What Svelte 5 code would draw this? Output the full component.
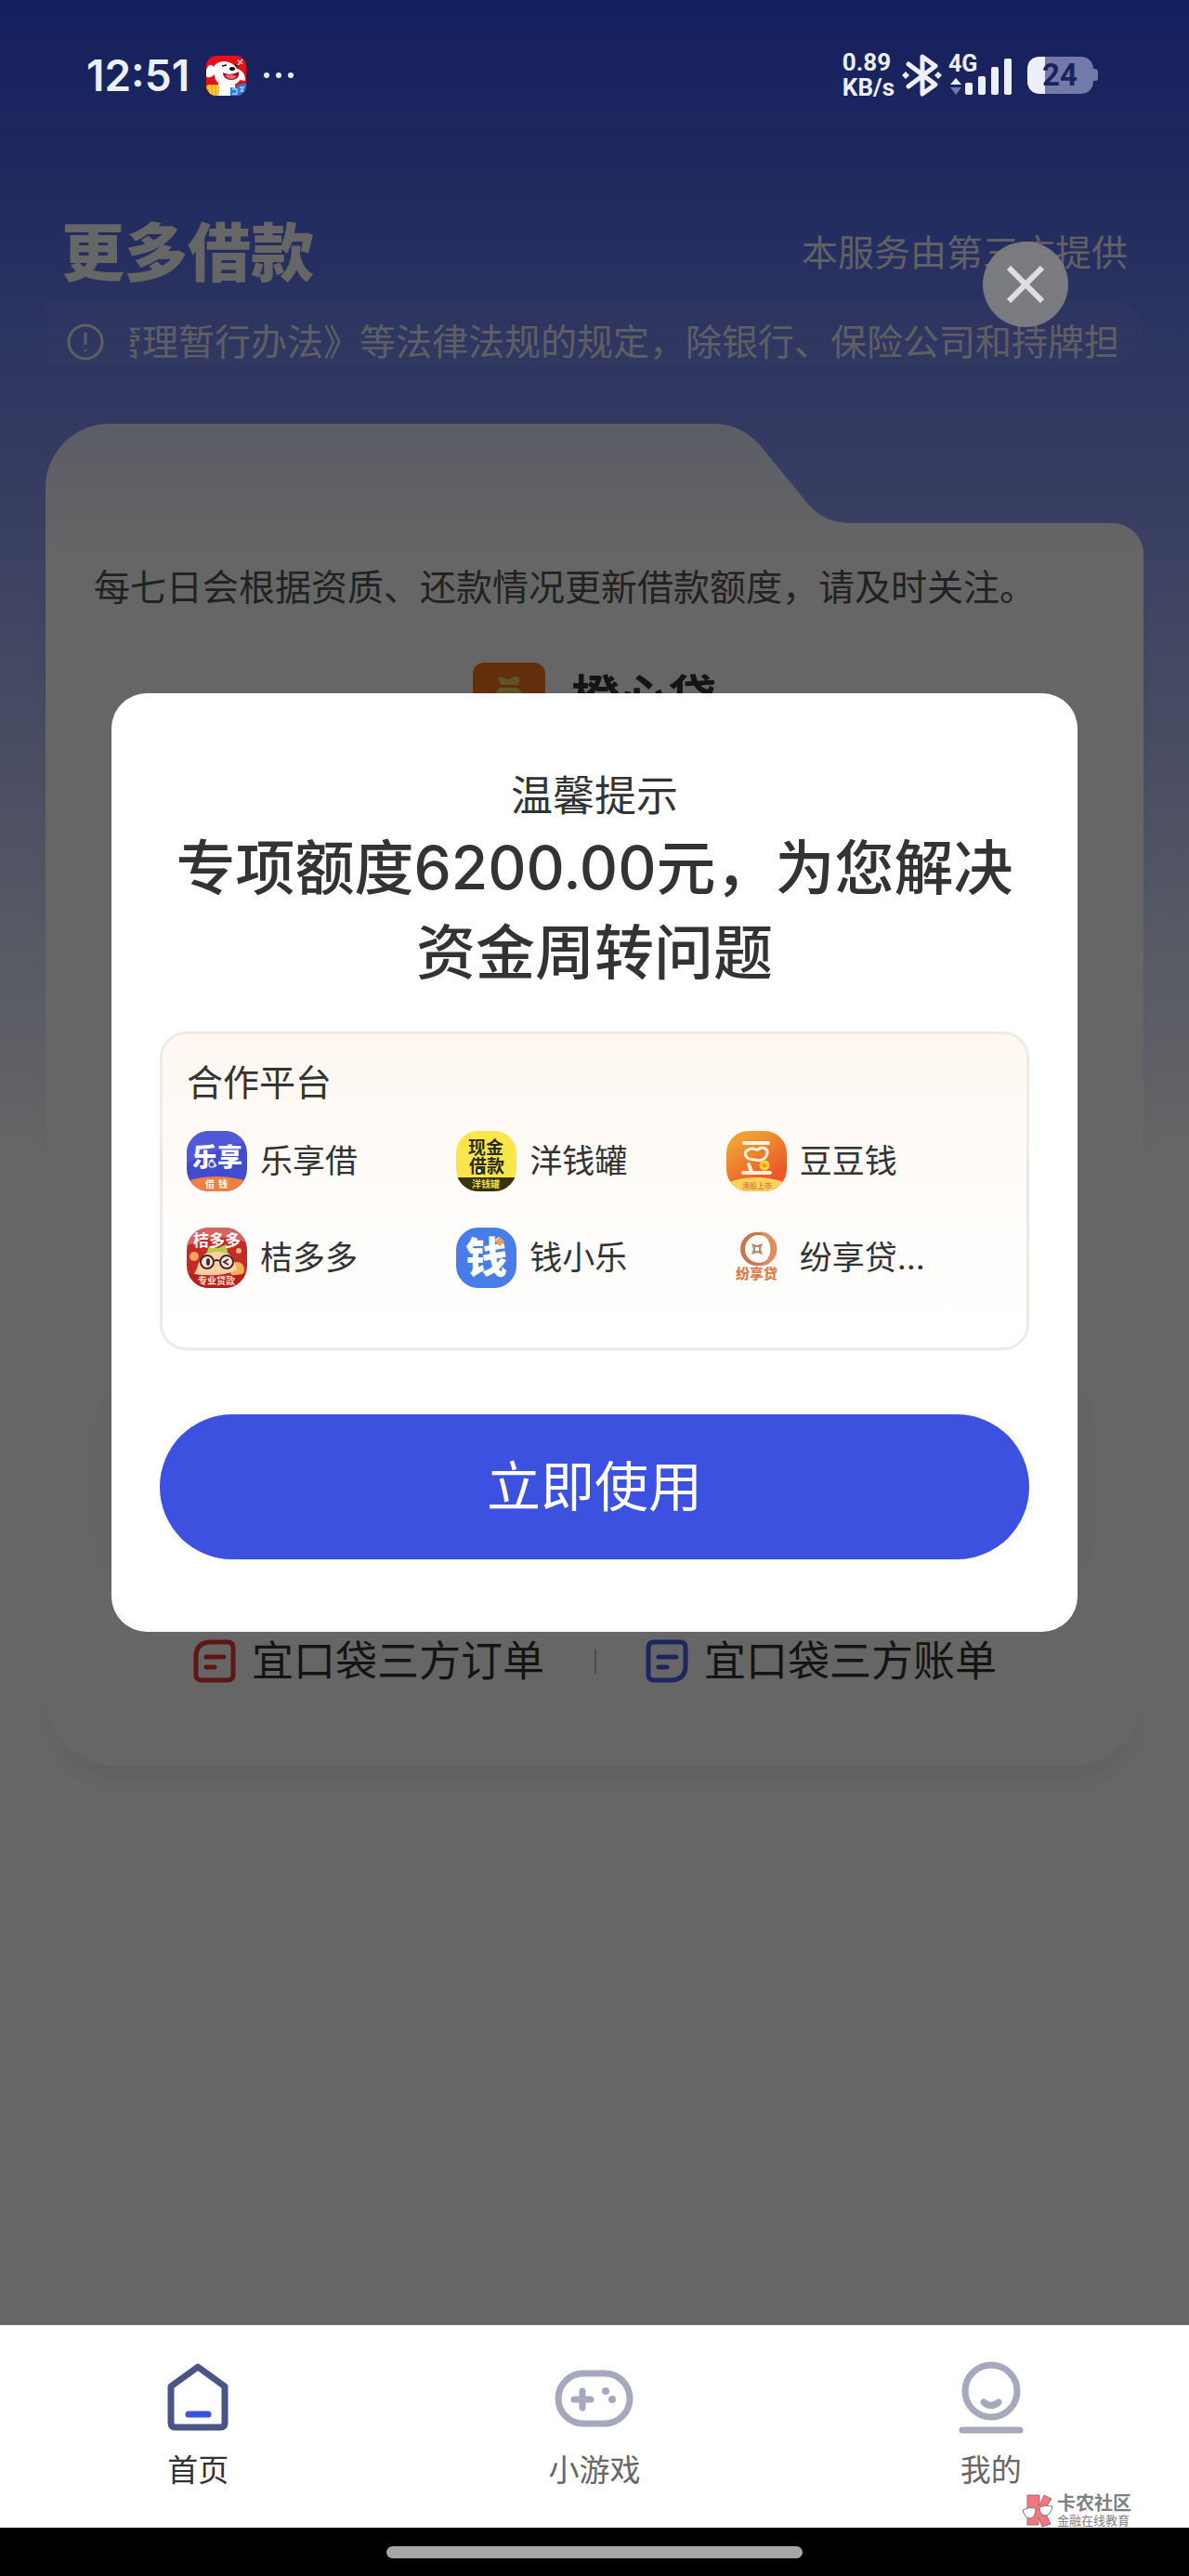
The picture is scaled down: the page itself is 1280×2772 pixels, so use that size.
<script>
  let dialogOpen = $state(true);
  let activeTab = $state('home');

  const notice = '管理暂行办法》等法律法规的规定，除银行、保险公司和持牌担';

  const partners = [
    { id: 'lexiang', name: '乐享借' },
    { id: 'yangqian', name: '洋钱罐' },
    { id: 'doudou', name: '豆豆钱' },
    { id: 'juduo', name: '桔多多' },
    { id: 'xiaole', name: '钱小乐' },
    { id: 'fenxiang', name: '纷享贷...' },
  ];

  const orders = [
    { label: '宜口袋三方订单', color: '#e83a32', flip: false },
    { label: '宜口袋三方账单', color: '#4a62ec', flip: true },
  ];

  const tabs = [
    { id: 'home', label: '首页' },
    { id: 'game', label: '小游戏' },
    { id: 'mine', label: '我的' },
  ];
</script>

<div class="screen" lang="zh-CN">
  <div class="page">
    <div class="status">
      <div class="status-side">
        <span class="time">12:51</span>
        <svg class="mascot" viewBox="0 0 43 43" aria-hidden="true">
          <rect width="43" height="43" fill="#e80f16" />
          <path d="M8 12C12 4 28 4 33 14C37 14 43 20 42 27L36 26C34 32 20 35 13 29C10 27 9 23 9 20C6 24 1 24 0 22V15C2 10 5 8 8 12Z" fill="#fff" />
          <path d="M13 29Q22 35 31 30L32 43H12Z" fill="#fff" />
          <path d="M18 18C23 21 30 20 35 17C36 24 32 26 27 26C22 26 18 23 18 18Z" fill="#9c1420" />
          <path d="M20 21C25 19 31 21 33 22C30 26 24 26 20 21Z" fill="#f2686c" />
          <ellipse cx="28" cy="14" rx="3" ry="2" fill="#111" />
          <path d="M17 11l5-1M31 10l4 1" stroke="#111" stroke-width="1.4" />
          <path d="M34 5l5 4M39 4l-5 6" stroke="#ffd0d0" stroke-width="1.6" />
          <rect y="31" width="14" height="12" rx="3" fill="#f9b120" />
          <path d="M4 32v11M8 32v11M12 32v11" stroke="#fcd44c" stroke-width="1.6" />
          <path d="M26 34l6 1 2-4 9-1v13H26Z" fill="#2b78e4" />
          <path d="M28 36h5v5h-5M36 34h4l-3 4h4" stroke="#9ed0ff" stroke-width="1.4" fill="none" />
        </svg>
        <svg class="dots" viewBox="0 0 34 8" aria-hidden="true">
          <circle cx="4" cy="4" r="3" />
          <circle cx="17" cy="4" r="3" />
          <circle cx="30" cy="4" r="3" />
        </svg>
      </div>
      <div class="status-side">
        <span class="speed">0.89<br />KB/s</span>
        <svg class="bluetooth" viewBox="0 0 44 48" aria-hidden="true">
          <path d="M7 12L36 34L22 44V4L36 14L7 36" fill="none" stroke="#eceefa" stroke-width="5" stroke-linejoin="round" stroke-linecap="round" />
          <path d="M4 20l4 4-4 4-4-4ZM39 20l4 4-4 4-4-4Z" fill="#eceefa" />
        </svg>
        <svg class="signal" viewBox="0 0 70 48" aria-hidden="true">
          <text x="1" y="20" class="net">4G</text>
          <path d="M3 34L9 27L15 34Z" fill="#eceefa" />
          <path d="M3 37L9 45L15 37Z" fill="#7078a8" />
          <g fill="#eceefa">
            <rect x="19" y="32" width="8" height="13" rx="2" />
            <rect x="33" y="25" width="8" height="20" rx="2" />
            <rect x="47" y="15" width="8" height="30" rx="2" />
            <rect x="61" y="6" width="8" height="39" rx="2" />
          </g>
        </svg>
        <svg class="battery" viewBox="0 0 76 40" aria-label="24%">
          <path d="M14 0H57C66 0 71 6 71 13C77 13 76 17 76 20C76 24 77 26 71 26C71 34 66 40 57 40H14C5 40 0 34 0 26V14C0 5 5 0 14 0Z" fill="#737aa8" />
          <path d="M19 0V40H14C5 40 0 34 0 26V14C0 5 5 0 14 0Z" fill="#eceefa" />
          <text x="16" y="31" class="level">24</text>
        </svg>
      </div>
    </div>

    <header class="head">
      <h1>更多借款</h1>
      <span class="provider">本服务由第三方提供</span>
    </header>

    <div class="notice">
      <svg viewBox="0 0 40 40" aria-hidden="true">
        <circle cx="20" cy="20" r="18" />
        <path d="M20 10v13M20 28v2" />
      </svg>
      <div class="notice-view"><span>{notice}</span></div>
    </div>

    <section class="card">
      <svg class="card-top" viewBox="0 0 1182 145" preserveAspectRatio="none" aria-hidden="true">
        <defs>
          <linearGradient id="cardFill" x1="0" y1="0" x2="0" y2="1">
            <stop offset="0" stop-color="#fff" stop-opacity="0.78" />
            <stop offset="1" stop-color="#fff" />
          </linearGradient>
        </defs>
        <path
          d="M0 145V70C0 31 31 0 70 0H718C741 0 759 10 773 28L817 82C832 101 846 107 872 107H1148C1167 107 1182 122 1182 141V145Z"
          fill="url(#cardFill)"
        />
        <path
          d="M1 110V70C1 31 31 1 70 1H718C741 1 759 11 773 29L817 83C832 102 846 108 872 108H1148C1167 108 1181 122 1181 141"
          fill="none"
          stroke="#fff"
          stroke-opacity="0.2"
          stroke-width="3"
        />
      </svg>
      <div class="card-body">
        <p class="tip">每七日会根据资质、还款情况更新借款额度，请及时关注。</p>
        <div class="product">
          <svg viewBox="0 0 78 78" aria-hidden="true">
            <rect width="78" height="78" rx="12" fill="#f57420" />
            <path d="M27 17Q30 14 33 16Q38 20 43 16Q49 13 50 17Q51 20 49 24H30Q29 20 27 17Z" fill="#e8d468" />
            <path d="M29 27H48C60 38 62 62 39 62C16 62 18 38 29 27Z" fill="#e8d468" />
          </svg>
          <strong>橙心贷</strong>
        </div>
        <div class="quota"></div>
        <nav class="orders">
          {#each orders as order}
            <a href="#orders">
              <svg viewBox="0 0 48 48" aria-hidden="true" fill="none" stroke={order.color} stroke-width="5">
                {#if order.flip}
                  <path d="M10 3H38Q44 3 44 9V28Q44 44 28 44H10Q4 44 4 38V9Q4 3 10 3Z" />
                {:else}
                  <path d="M20 3H38Q44 3 44 9V38Q44 44 38 44H10Q4 44 4 38V19Q4 3 20 3Z" />
                {/if}
                <path d="M15 19H34M15 30H24" stroke-linecap="round" />
              </svg>
              {order.label}
            </a>
          {/each}
        </nav>
      </div>
    </section>

    {#if dialogOpen}
      <div class="mask">
        <button class="close" aria-label="关闭" onclick={() => (dialogOpen = false)}>
          <svg viewBox="0 0 40 40" aria-hidden="true"><path d="M2 2L38 38M38 2L2 38" /></svg>
        </button>
        <div class="dialog" role="dialog" aria-labelledby="dialog-title">
          <p class="dialog-tag">温馨提示</p>
          <h2 id="dialog-title">专项额度6200.00元，为您解决资金周转问题</h2>
          <div class="panel">
            <h3>合作平台</h3>
            <ul>
              {#each partners as partner}
                <li>
                  <svg class="logo" viewBox="0 0 65 65" aria-hidden="true">
                    {#if partner.id === 'lexiang'}
                      <rect width="65" height="65" fill="#414bd0" />
                      <path d="M0 0H65V12Q30 20 0 34Z" fill="#5159d6" />
                      <text x="6" y="38" font-size="27" font-weight="900" fill="#fff">乐享</text>
                      <circle cx="27" cy="36" r="3" fill="#414bd0" stroke="#d9c8d8" stroke-width="1.5" />
                      <path d="M0 54Q32 44 65 54V65H0Z" fill="#ef8040" />
                      <text x="20" y="61" font-size="10" font-weight="700" fill="#fff">借</text>
                      <text x="34" y="61" font-size="10" font-weight="700" fill="#fff">钱</text>
                    {:else if partner.id === 'yangqian'}
                      <rect width="65" height="65" fill="#fae54b" />
                      <text x="13" y="25" font-size="19" font-weight="700" fill="#2b2913">现金</text>
                      <text x="14" y="45" font-size="19" font-weight="700" fill="#2b2913">借款</text>
                      <circle cx="25" cy="43" r="3" fill="#fff" stroke="#2b2913" stroke-width="2" />
                      <rect y="50" width="65" height="15" fill="#37330d" />
                      <text x="17" y="61" font-size="10" font-weight="700" fill="#f1dd48">洋钱罐</text>
                    {:else if partner.id === 'doudou'}
                      <defs>
                        <linearGradient id="bean" x1="0.2" y1="0" x2="0.8" y2="1">
                          <stop offset="0.1" stop-color="#efa034" />
                          <stop offset="0.8" stop-color="#ee5728" />
                        </linearGradient>
                      </defs>
                      <rect width="65" height="65" fill="url(#bean)" />
                      <g fill="none" stroke="#fff1dc" stroke-width="4" stroke-linecap="round">
                        <path d="M19 13H45" />
                        <path d="M24 20C29 17 31 21 34 20C39 16 45 19 44 24C43 30 37 33 31 31C20 31 17 23 24 20Z" stroke-width="3" />
                        <path d="M24 36L27 44M18 45H47" />
                      </g>
                      <circle cx="41" cy="37" r="4" fill="#f0a030" stroke="#ffd632" stroke-width="3" />
                      <path d="M0 56Q32 44 65 56V65H0Z" fill="#fbd25c" />
                      <text x="17" y="62" font-size="8" font-weight="700" fill="#d98a3a">港股上市</text>
                    {:else if partner.id === 'juduo'}
                      <rect width="65" height="65" fill="#c42a28" />
                      <path d="M0 0H65V16Q30 4 0 20Z" fill="#d76360" />
                      <circle cx="8" cy="31" r="5" fill="#f5a45c" />
                      <circle cx="56" cy="25" r="3" fill="#f8b878" />
                      <circle cx="54" cy="45" r="8" fill="#f3b04e" />
                      <path d="M11 44Q16 24 33 24Q50 24 54 46Q34 54 8 50Z" fill="#fbd0a4" />
                      <path d="M22 26L24 20L34 22L43 18L44 28Q33 24 22 28Z" fill="#b8cf45" />
                      <text x="7" y="20" font-size="17" font-weight="700" fill="#fff">桔多多</text>
                      <g fill="#fbe4d4" stroke="#3f2a2c" stroke-width="2">
                        <circle cx="22" cy="37" r="7" />
                        <circle cx="43" cy="37" r="7" />
                        <path d="M30 36Q32 34 35 36" fill="none" />
                      </g>
                      <ellipse cx="23" cy="37" rx="2" ry="4" fill="#4a2c2e" />
                      <path d="M45 34L40 37L45 40" fill="none" stroke="#4a2c2e" stroke-width="2" />
                      <path d="M0 49Q32 56 65 49V65H0Z" fill="#b8201f" />
                      <text x="12" y="61" font-size="10" font-weight="700" fill="#ffe0c0">专业贷款</text>
                    {:else if partner.id === 'xiaole'}
                      <rect width="65" height="65" fill="#477de6" />
                      <text x="10" y="49" font-size="45" font-weight="900" fill="#fff">钱</text>
                      <path d="M47 10L52 15L47 20L42 15Z" fill="#f09a52" />
                    {:else}
                      <rect width="65" height="65" fill="#fffefd" />
                      <path fill-rule="evenodd" d="M33 5A18 18 0 1 0 33 41A18 18 0 1 0 33 5ZM35 8A15 15 0 1 1 35 38A15 15 0 1 1 35 8Z" fill="#c9764c" />
                      <path d="M36 5A18 18 0 0 1 36 41A20 20 0 0 0 48 23A20 20 0 0 0 36 5Z" fill="#dd8d62" stroke="#dd8d62" />
                      <path d="M27 17L33 19L39 17L37 23L39 29L33 27L27 29L29 23Z" fill="#b98a70" />
                      <rect x="31" y="21" width="4" height="4" fill="#fff" />
                      <text x="10" y="55" font-size="15" font-weight="900" fill="#d8814f">纷享贷</text>
                    {/if}
                  </svg>
                  {partner.name}
                </li>
              {/each}
            </ul>
          </div>
          <button class="submit">立即使用</button>
        </div>
      </div>
    {/if}
  </div>

  <nav class="tabbar">
    {#each tabs as tab}
      <button class:active={activeTab === tab.id} onclick={() => (activeTab = tab.id)}>
        <svg viewBox="0 0 86 86" aria-hidden="true" fill="none" stroke-width="7">
          {#if tab.id === 'home'}
            <path d="M43 9L14 30V69Q14 74 19 74H67Q72 74 72 69V30Z" stroke="#4b5585" stroke-linejoin="round" />
            <path d="M33 60H54" stroke="#3a52e2" stroke-linecap="round" />
          {:else if tab.id === 'game'}
            <rect x="4" y="16" width="77" height="54" rx="27" stroke="#a6a9bd" />
            <path d="M30 35V53M21 44H39" stroke="#a6a9bd" stroke-linecap="round" />
            <circle cx="55" cy="35" r="4" fill="#a6a9bd" stroke="none" />
            <circle cx="62" cy="44" r="4" fill="#a6a9bd" stroke="none" />
          {:else}
            <circle cx="43" cy="35" r="28" stroke="#a6a9bd" />
            <path d="M35 47Q43 54 51 47" stroke="#a6a9bd" stroke-linecap="round" />
            <path d="M12 77H74" stroke="#a6a9bd" stroke-linecap="round" />
          {/if}
        </svg>
        {tab.label}
      </button>
    {/each}
    <div class="mark">
      <svg viewBox="0 0 34 36" aria-hidden="true">
        <path d="M6 1H19V12L24 1L32 5L24 17L31 32L22 35L18 25V33H6Z" fill="#f4777f" stroke="#8a7376" />
        <path d="M1 17Q8 13 15 15Q15 25 9 26Q3 26 1 17ZM19 14Q25 11 33 13Q31 23 25 23Q19 22 19 14Z" fill="#fff" stroke="#777" />
      </svg>
      <div>
        <b>卡农社区</b>
        <small>金融在线教育</small>
      </div>
    </div>
  </nav>
  <div class="gesture"><span></span></div>
</div>

<style>
  :global(body) {
    background: #000;
  }

  .screen {
    min-height: 100vh;
    display: flex;
    flex-direction: column;
    font-family: Inter, 'Noto Sans CJK SC', sans-serif;
    color: #333;
  }

  .screen h1,
  .screen h2,
  .screen h3,
  .screen p,
  .screen ul {
    margin: 0;
    padding: 0;
    font-weight: 400;
  }

  .screen svg {
    display: block;
    flex-shrink: 0;
  }

  button {
    border: none;
    padding: 0;
    font-family: inherit;
    cursor: pointer;
  }

  .page {
    position: relative;
    flex: 1;
    background: #fff linear-gradient(#324eeb, #fff) top / 100% 1240px no-repeat;
  }

  .status {
    position: relative;
    z-index: 2;
    height: 162px;
    padding: 0 98px 0 93px;
    display: flex;
    align-items: center;
    justify-content: space-between;
    color: #eceefa;
  }

  .status-side {
    display: flex;
    align-items: center;
  }

  .time {
    font-size: 46px;
    font-weight: 600;
  }

  .mascot {
    width: 43px;
    height: 43px;
    margin: 0 18px;
    border-radius: 11px;
  }

  .dots {
    width: 34px;
    height: 8px;
    fill: #eceefa;
  }

  .speed {
    font: 700 26px/27px Roboto, sans-serif;
  }

  .bluetooth {
    width: 44px;
    height: 48px;
    margin: 0 5px 0 8px;
  }

  .screen .signal {
    width: 70px;
    height: 48px;
    margin-right: 16px;
    overflow: visible;
  }

  .net {
    font: 700 25px Roboto, sans-serif;
    fill: #eceefa;
  }

  .battery {
    width: 76px;
    height: 40px;
  }

  .level {
    font: 700 33px Roboto, sans-serif;
    fill: #19235e;
  }

  .head {
    padding: 62px 66px 0;
    display: flex;
    align-items: center;
    justify-content: space-between;
    color: #fff;
  }

  .screen .head h1 {
    font-size: 68px;
    line-height: 96px;
    font-weight: 900;
  }

  .provider {
    font-size: 39px;
    line-height: 96px;
    opacity: 0.9;
  }

  .notice {
    height: 68px;
    margin: 4px 50px 0;
    padding: 20px 28px 0 22px;
    box-sizing: border-box;
    display: flex;
    align-items: center;
    gap: 28px;
    border-radius: 0 34px 34px 0;
    background: rgba(255, 255, 255, 0.06);
    color: #fff;
  }

  .notice svg {
    width: 40px;
    height: 40px;
    fill: none;
    stroke: rgba(255, 255, 255, 0.85);
    stroke-width: 3;
  }

  .notice-view {
    flex: 1;
    display: flex;
    overflow: hidden;
    font-size: 39px;
    line-height: 52px;
    white-space: nowrap;
    opacity: 0.85;
  }

  .notice-view span {
    margin-left: -26px;
  }

  .card {
    margin: 64px 49px 0;
  }

  .card-top {
    width: 100%;
    height: 145px;
  }

  .card-body {
    padding: 0 52px 81px;
    border-radius: 0 0 76px 76px;
    background: #fff;
    box-shadow: 0 24px 24px -8px rgba(0, 0, 0, 0.06);
  }

  .card .tip {
    font-size: 39px;
    line-height: 62px;
    color: #555;
  }

  .product {
    margin-top: 50px;
    display: flex;
    align-items: center;
    justify-content: center;
    gap: 28px;
  }

  .product svg {
    width: 78px;
    height: 78px;
  }

  .product strong {
    font-size: 52px;
    line-height: 78px;
    color: #333;
  }

  .quota {
    height: 236px;
    margin-top: 686px;
    border-radius: 60px;
    background: #fafafa;
  }

  .orders {
    margin-top: 44px;
    display: flex;
    justify-content: center;
  }

  .orders a {
    display: flex;
    align-items: center;
    gap: 16px;
    padding: 0 54px;
    font-size: 45px;
    line-height: 62px;
    color: #333;
    text-decoration: none;
  }

  .orders a + a {
    background: linear-gradient(#bbb, #bbb) left center / 2px 26px no-repeat;
  }

  .orders svg {
    width: 48px;
    height: 48px;
  }

  .mask {
    position: absolute;
    inset: 0;
    z-index: 1;
    display: flex;
    align-items: center;
    justify-content: center;
    background: rgba(0, 0, 0, 0.6);
  }

  .close {
    position: absolute;
    top: 260px;
    right: 130px;
    width: 92px;
    height: 92px;
    display: flex;
    align-items: center;
    justify-content: center;
    border-radius: 50%;
    background: rgba(126, 126, 127, 0.96);
  }

  .close svg {
    width: 40px;
    height: 40px;
    fill: none;
    stroke: #dedede;
    stroke-width: 6;
  }

  .dialog {
    flex: 1;
    margin: 0 120px;
    padding: 80px 52px 78px;
    border-radius: 38px;
    background: #fff;
    text-align: center;
  }

  .dialog .dialog-tag {
    font-size: 45px;
    line-height: 62px;
  }

  .screen .dialog h2 {
    font-size: 64px;
    line-height: 91px;
    font-weight: 500;
  }

  .panel {
    margin-top: 40px;
    padding: 24px 33px 64px 26px;
    border: 3px solid #f0eae6;
    border-radius: 28px;
    background: linear-gradient(#fff7f1, #fffdfb 60%, #fff);
    text-align: left;
  }

  .panel h3 {
    font-size: 39px;
    line-height: 56px;
  }

  .panel ul {
    margin-top: 24px;
    display: grid;
    grid-template-columns: repeat(3, 1fr);
    gap: 39px 0;
    list-style: none;
  }

  .panel li {
    display: flex;
    align-items: center;
    gap: 14px;
    font-size: 35px;
    line-height: 65px;
  }

  .logo {
    width: 65px;
    height: 65px;
    border-radius: 24px;
  }

  .submit {
    width: 100%;
    height: 156px;
    margin-top: 69px;
    padding-bottom: 8px;
    border-radius: 78px;
    background: #3c51e0;
    color: #fff;
    font-size: 58px;
  }

  .tabbar {
    position: relative;
    height: 218px;
    display: flex;
    background: #fff;
  }

  .tabbar button {
    flex: 1;
    display: flex;
    flex-direction: column;
    align-items: center;
    gap: 12px;
    padding-top: 36px;
    background: none;
    font-size: 33px;
    line-height: 44px;
    color: #666;
  }

  .tabbar .active {
    color: #333;
  }

  .tabbar button svg {
    width: 86px;
    height: 86px;
  }

  .mark {
    position: absolute;
    right: 62px;
    bottom: 0;
    display: flex;
    align-items: flex-end;
    gap: 4px;
    color: #808080;
  }

  .mark svg {
    width: 34px;
    height: 36px;
  }

  .mark b,
  .mark small {
    display: block;
    font-size: 20px;
    line-height: 20px;
    font-weight: 700;
  }

  .mark small {
    font-size: 13px;
    line-height: 16px;
    font-weight: 400;
  }

  .gesture {
    height: 52px;
    display: flex;
    align-items: center;
    justify-content: center;
    background: #000;
  }

  .gesture span {
    width: 35%;
    height: 13px;
    border-radius: 7px;
    background: #a6a6a6;
  }
</style>
